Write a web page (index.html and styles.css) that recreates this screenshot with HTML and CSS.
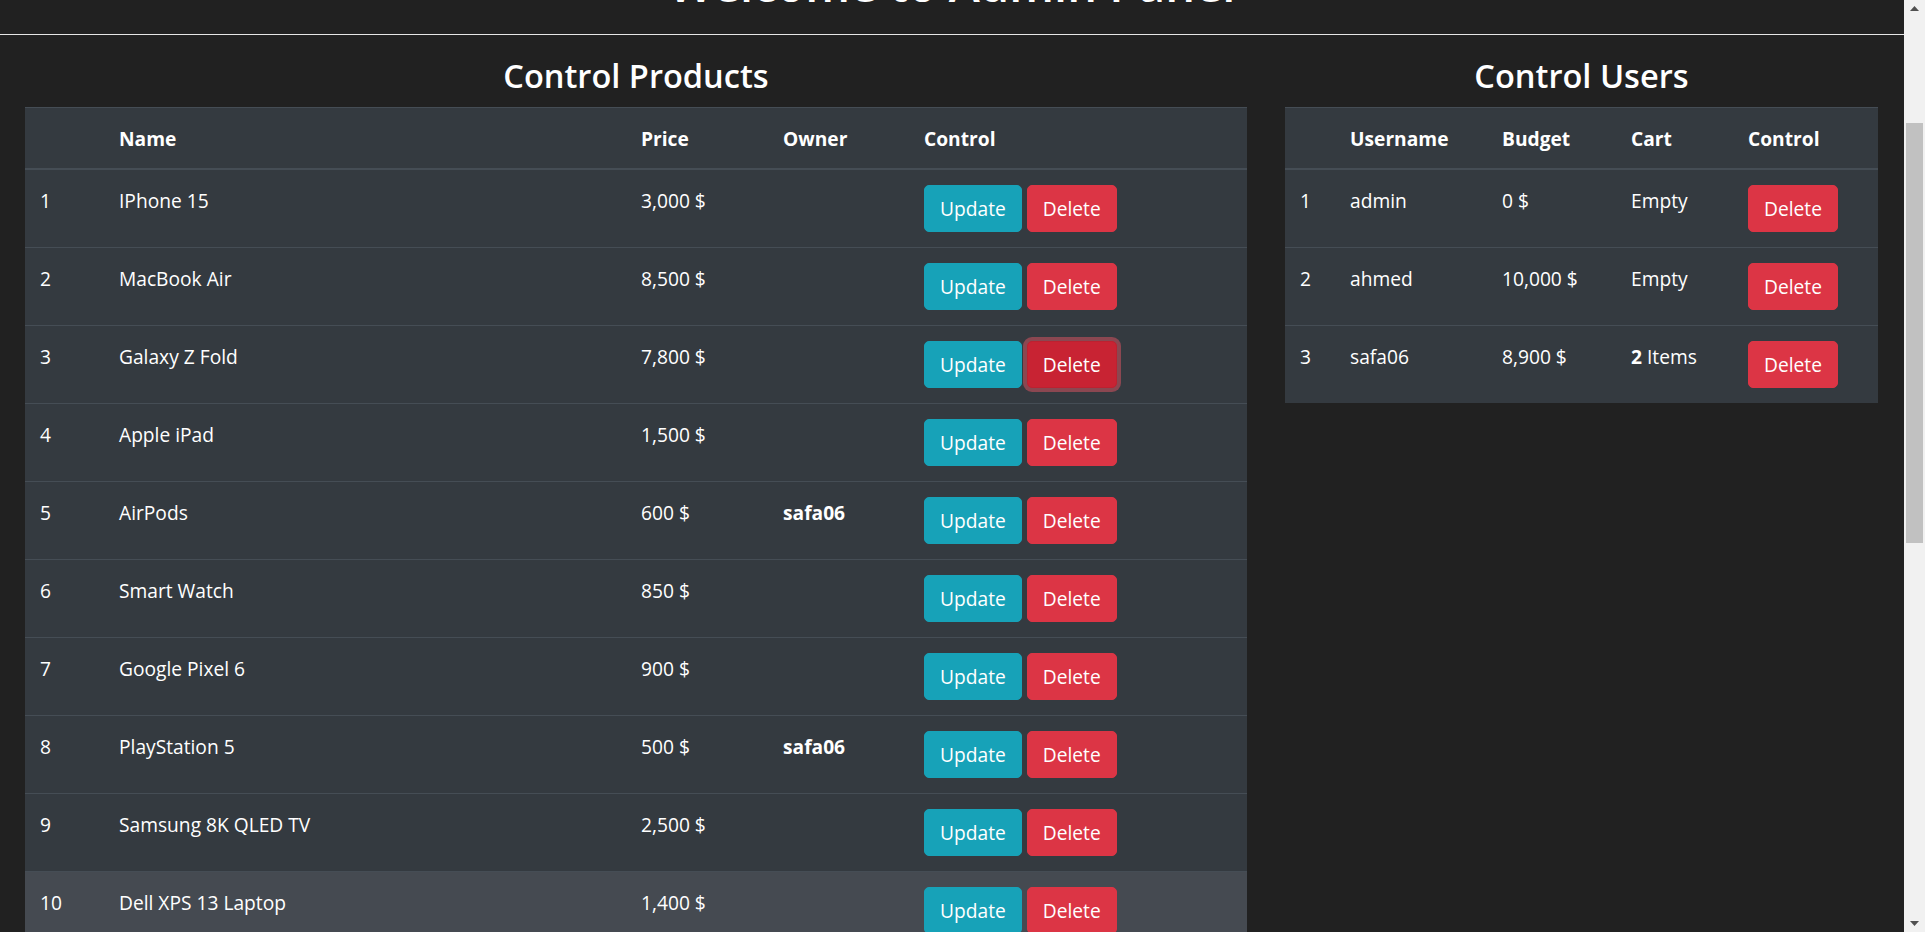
FILE: index.html
```html
<!DOCTYPE html>
<html lang="en">
<head>
<meta charset="utf-8">
<title>Admin Panel</title>
<link rel="stylesheet" href="styles.css">
</head>
<body>
<div class="page">
  <header class="top">
    <h1 class="title">Welcome to Admin Panel</h1>
    <hr class="rule">
  </header>
  <main class="panels">
    <section class="panel">
      <h3 class="panel-title">Control Products</h3>
      <table class="tbl">
        <colgroup>
          <col class="p-id"><col class="p-name"><col class="p-price"><col class="p-owner"><col class="p-ctrl">
        </colgroup>
        <thead>
          <tr><th></th><th>Name</th><th>Price</th><th>Owner</th><th>Control</th></tr>
        </thead>
        <tbody>
          <tr><td>1</td><td>IPhone 15</td><td>3,000 $</td><td></td><td><button class="btn btn-info">Update</button> <button class="btn btn-danger">Delete</button></td></tr>
          <tr><td>2</td><td>MacBook Air</td><td>8,500 $</td><td></td><td><button class="btn btn-info">Update</button> <button class="btn btn-danger">Delete</button></td></tr>
          <tr><td>3</td><td>Galaxy Z Fold</td><td>7,800 $</td><td></td><td><button class="btn btn-info">Update</button> <button class="btn btn-danger is-focus">Delete</button></td></tr>
          <tr><td>4</td><td>Apple iPad</td><td>1,500 $</td><td></td><td><button class="btn btn-info">Update</button> <button class="btn btn-danger">Delete</button></td></tr>
          <tr><td>5</td><td>AirPods</td><td>600 $</td><td><b>safa06</b></td><td><button class="btn btn-info">Update</button> <button class="btn btn-danger">Delete</button></td></tr>
          <tr><td>6</td><td>Smart Watch</td><td>850 $</td><td></td><td><button class="btn btn-info">Update</button> <button class="btn btn-danger">Delete</button></td></tr>
          <tr><td>7</td><td>Google Pixel 6</td><td>900 $</td><td></td><td><button class="btn btn-info">Update</button> <button class="btn btn-danger">Delete</button></td></tr>
          <tr><td>8</td><td>PlayStation 5</td><td>500 $</td><td><b>safa06</b></td><td><button class="btn btn-info">Update</button> <button class="btn btn-danger">Delete</button></td></tr>
          <tr><td>9</td><td>Samsung 8K QLED TV</td><td>2,500 $</td><td></td><td><button class="btn btn-info">Update</button> <button class="btn btn-danger">Delete</button></td></tr>
          <tr class="is-hover"><td>10</td><td>Dell XPS 13 Laptop</td><td>1,400 $</td><td></td><td><button class="btn btn-info">Update</button> <button class="btn btn-danger">Delete</button></td></tr>
        </tbody>
      </table>
    </section>
    <section class="panel">
      <h3 class="panel-title">Control Users</h3>
      <table class="tbl">
        <colgroup>
          <col class="u-id"><col class="u-name"><col class="u-budget"><col class="u-cart"><col class="u-ctrl">
        </colgroup>
        <thead>
          <tr><th></th><th>Username</th><th>Budget</th><th>Cart</th><th>Control</th></tr>
        </thead>
        <tbody>
          <tr><td>1</td><td>admin</td><td>0 $</td><td>Empty</td><td><button class="btn btn-danger">Delete</button></td></tr>
          <tr><td>2</td><td>ahmed</td><td>10,000 $</td><td>Empty</td><td><button class="btn btn-danger">Delete</button></td></tr>
          <tr><td>3</td><td>safa06</td><td>8,900 $</td><td><b>2</b> Items</td><td><button class="btn btn-danger">Delete</button></td></tr>
        </tbody>
      </table>
    </section>
  </main>
</div>
<div class="scrollbar" aria-hidden="true">
  <div class="sb-btn">
    <svg width="9" height="5" viewBox="0 0 9 5"><polygon points="4.5,0 9,5 0,5" fill="#505050"/></svg>
  </div>
  <div class="sb-track">
    <div class="sb-thumb"></div>
  </div>
  <div class="sb-btn">
    <svg width="9" height="5" viewBox="0 0 9 5"><polygon points="0,0 9,0 4.5,5" fill="#505050"/></svg>
  </div>
</div>
<script src="main.js"></script>
</body>
</html>
```

FILE: styles.css
```css
html {
  background: #212121;
  scrollbar-width: none;
}
html::-webkit-scrollbar {
  display: none;
}
body {
  margin: 0 21px 0 0;
  background: #212121;
  color: #fff;
  font-family: "Open Sans", "Noto Sans", sans-serif;
  font-size: 19.2px;
  line-height: 30px;
}
.page {
  min-height: 1993px;
}
.top {
  padding-top: 189px;
}
.title {
  margin: 0;
  text-align: center;
  font-size: 47px;
  line-height: 60px;
  font-weight: 600;
}
.rule {
  margin: 20px 0;
  border: 0;
  border-top: 1px solid #e6e6e6;
  height: 0;
}
.panels {
  display: grid;
  grid-template-columns: 1222px 593px;
  column-gap: 38px;
  padding: 0 26px 0 25px;
  align-items: start;
}
.panel-title {
  margin: 0 0 10px;
  text-align: center;
  font-size: 32.6px;
  line-height: 42px;
  font-weight: 600;
}
.tbl {
  width: 100%;
  table-layout: fixed;
  border-collapse: collapse;
  background: #343a40;
  color: #fff;
}
.tbl th,
.tbl td {
  padding: 16px 15px 14px;
  text-align: left;
  vertical-align: top;
  border-top: 1px solid #454d55;
}
.tbl th {
  font-weight: 700;
}
.tbl thead th {
  border-bottom: 2px solid #454d55;
}
.tbl b {
  font-weight: 700;
}
.tbl tr.is-hover td {
  background: #454a51;
}
.p-id { width: 79px; }
.p-name { width: 522px; }
.p-price { width: 142px; }
.p-owner { width: 141px; }
.p-ctrl { width: 338px; }
.u-id { width: 50px; }
.u-name { width: 152px; }
.u-budget { width: 129px; }
.u-cart { width: 117px; }
.u-ctrl { width: 145px; }
.btn {
  display: inline-block;
  font-family: inherit;
  font-size: 19.2px;
  line-height: 30px;
  padding: 8px 15px 7px;
  margin: -1px 0 1px;
  border: 1px solid transparent;
  border-radius: 5px;
  color: #fff;
  cursor: pointer;
  vertical-align: top;
}
.btn-info {
  background: #17a2b8;
  border-color: #17a2b8;
}
.btn-danger {
  background: #dc3545;
  border-color: #dc3545;
}
.btn-danger.is-focus {
  background: #c82333;
  border-color: #bd2130;
  box-shadow: 0 0 0 4px rgba(225, 83, 97, 0.5);
}
.scrollbar {
  position: fixed;
  top: 0;
  right: 0;
  width: 21px;
  height: 100vh;
  background: #f1f1f1;
  display: flex;
  flex-direction: column;
}
.sb-btn {
  height: 17px;
  display: flex;
  align-items: center;
  justify-content: center;
  flex: none;
}
.sb-btn svg {
  display: block;
}
.sb-track {
  flex: 1;
  padding: 106px 2px 0;
}
.sb-thumb {
  height: 420px;
  background: #c1c1c1;
}
```

FILE: main.js
```js
window.scrollTo(0, 235);
```
